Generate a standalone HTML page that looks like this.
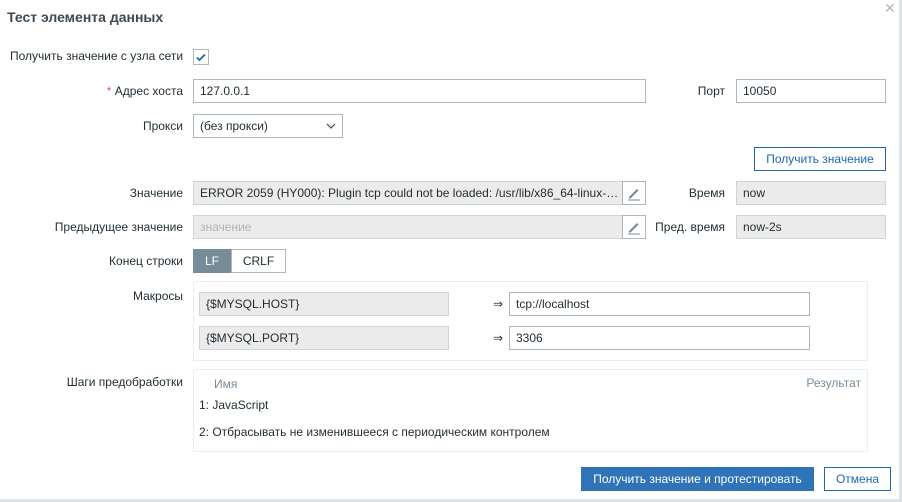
<!DOCTYPE html>
<html><head><meta charset="utf-8"><style>
*{box-sizing:border-box}
body{margin:0;width:902px;height:502px;background:#fff;font-family:"Liberation Sans",sans-serif;font-size:12px;color:#1f2c33;position:relative;overflow:hidden}
.a{position:absolute}
.lbl{position:absolute;text-align:right;white-space:nowrap}
.in{position:absolute;border:1px solid #aeb7bc;background:#fff;height:24px;padding:0 6px;line-height:22px;white-space:nowrap;overflow:hidden}
.ro{background:#ebebeb;border-color:#d0d4d6}
.btn{position:absolute;height:24px;line-height:22px;text-align:center;border:1px solid #1f65b5;color:#1f65b5;background:#fff}
</style></head><body>
<div class="a" style="left:7px;top:9px;font-size:14px;font-weight:bold;color:#3e4a53">Тест элемента данных</div>
<div class="a" style="left:884px;top:0px;color:#b0b8bd;font-size:14px">✕</div>
<div class="a" style="left:899px;top:0;width:3px;height:502px;background:#dfe3e5"></div>
<div class="a" style="left:0;top:499px;width:902px;height:3px;background:#dfe3e5"></div>

<div class="lbl" style="left:10px;top:49px">Получить значение с узла сети</div>
<div class="a" style="left:193px;top:49px;width:16px;height:16px;border:1px solid #aeb7bc;background:#fff"><svg width="14" height="14" viewBox="0 0 14 14" style="position:absolute;left:0;top:0"><path d="M3 7.5l2.5 2.5 5.5-5.5" stroke="#1f65b5" stroke-width="1.8" fill="none"/></svg></div>

<div class="lbl" style="right:719px;top:84px"><span style="color:#e45959">*</span> Адрес хоста</div>
<div class="in" style="left:193px;top:79px;width:453px">127.0.0.1</div>
<div class="lbl" style="right:177px;top:84px">Порт</div>
<div class="in" style="left:736px;top:79px;width:150px">10050</div>

<div class="lbl" style="right:719px;top:119px">Прокси</div>
<div class="in" style="left:193px;top:114px;width:150px">(без прокси)<svg class="a" style="right:6px;top:8px" width="10" height="7"><path d="M1 1l4 4 4-4" stroke="#3e4a53" stroke-width="1.2" fill="none"/></svg></div>

<div class="btn" style="left:754px;top:147px;width:132px">Получить значение</div>

<div class="lbl" style="right:719px;top:186px">Значение</div>
<div class="in ro" style="left:193px;top:181px;width:430px">ERROR 2059 (HY000): Plugin tcp could not be loaded: /usr/lib/x86_64-linux-…</div>
<div class="in" style="left:622px;top:181px;width:24px;padding:0"><svg width="22" height="22"><path d="M6 15l8-8 1.5 1.5-8 8H6z" fill="#7a8791"/><path d="M5 18h12" stroke="#7a8791"/></svg></div>
<div class="lbl" style="right:177px;top:186px">Время</div>
<div class="in ro" style="left:736px;top:181px;width:150px">now</div>

<div class="lbl" style="right:719px;top:220px">Предыдущее значение</div>
<div class="in ro" style="left:193px;top:215px;width:430px;color:#acb3b7">значение</div>
<div class="in" style="left:622px;top:215px;width:24px;padding:0"><svg width="22" height="22"><path d="M6 15l8-8 1.5 1.5-8 8H6z" fill="#7a8791"/><path d="M5 18h12" stroke="#7a8791"/></svg></div>
<div class="lbl" style="right:177px;top:220px">Пред. время</div>
<div class="in ro" style="left:736px;top:215px;width:150px">now-2s</div>

<div class="lbl" style="right:719px;top:254px">Конец строки</div>
<div class="a" style="left:193px;top:249px;width:38px;height:24px;background:#768d99;color:#fff;text-align:center;line-height:24px">LF</div>
<div class="a" style="left:231px;top:249px;width:55px;height:24px;border:1px solid #aeb7bc;text-align:center;line-height:22px">CRLF</div>

<div class="lbl" style="right:719px;top:289px">Макросы</div>
<div class="a" style="left:193px;top:281px;width:675px;height:80px;border:1px solid #ebeef0"></div>
<div class="in ro" style="left:199px;top:292px;width:250px">{$MYSQL.HOST}</div>
<div class="a" style="left:493px;top:297px">⇒</div>
<div class="in" style="left:509px;top:292px;width:301px">tcp://localhost</div>
<div class="in ro" style="left:199px;top:326px;width:250px">{$MYSQL.PORT}</div>
<div class="a" style="left:493px;top:331px">⇒</div>
<div class="in" style="left:509px;top:326px;width:301px">3306</div>

<div class="lbl" style="right:719px;top:375px">Шаги предобработки</div>
<div class="a" style="left:193px;top:369px;width:675px;height:83px;border:1px solid #ebeef0"></div>
<div class="a" style="left:214px;top:377px;color:#768d99">Имя</div>
<div class="a" style="right:41px;top:376px;color:#768d99">Результат</div>
<div class="a" style="left:199px;top:398px">1: JavaScript</div>
<div class="a" style="left:199px;top:425px">2: Отбрасывать не изменившееся с периодическим контролем</div>

<div class="btn" style="left:581px;top:467px;width:233px;background:#2f74b9;border-color:#2f74b9;color:#fff">Получить значение и протестировать</div>
<div class="btn" style="left:824px;top:467px;width:67px">Отмена</div>
</body></html>
